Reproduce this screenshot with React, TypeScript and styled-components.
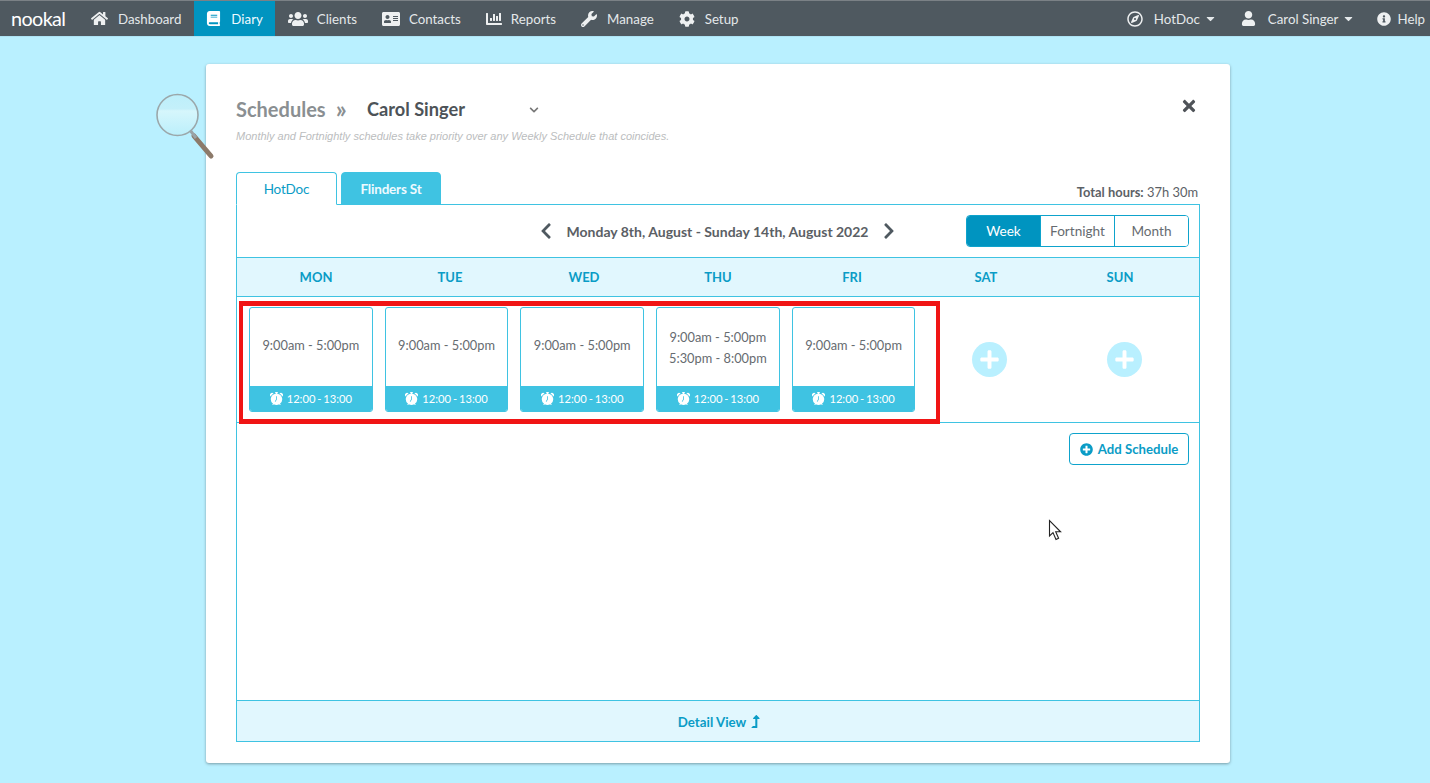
import React from "react";
import styled, { createGlobalStyle } from "styled-components";
import {
  FaHome, FaBook, FaUsers, FaAddressCard, FaChartBar, FaWrench, FaCog, FaRegCompass,
  FaUser, FaInfoCircle, FaCaretDown, FaChevronLeft, FaChevronRight, FaChevronDown,
  FaTimes, FaPlus, FaPlusCircle, FaLevelUpAlt,
} from "react-icons/fa";
import { BsAlarmFill } from "react-icons/bs";

const Global = createGlobalStyle`
  html, body { margin: 0; padding: 0; height: 100%; background: #b9f0ff; overflow: hidden; }
  body { font-family: Lato, "Open Sans", sans-serif; color: #555; }
  * { box-sizing: border-box; }
`;

const Page = styled.div`
  position: relative;
  width: 1430px;
  height: 783px;
  overflow: hidden;
`;
const TopBar = styled.header`
  height: 37px;
  background: #4f5960;
  border-top: 1px solid #7b8186;
  border-bottom: 1px solid #aee3f3;
  display: flex;
  align-items: stretch;
  color: #e4e8ea;
  font-size: 13.3px;
`;
const Logo = styled.div`
  width: 78.5px;
  padding-left: 11px;
  font-size: 19.8px;
  font-weight: 400;
  color: #fff;
  line-height: 35px;
  letter-spacing: -0.6px;
`;
const NavItem = styled.div<{ $active?: boolean; $gap?: number }>`
  display: flex;
  align-items: center;
  gap: ${(p) => p.$gap ?? 10}px;
  padding: 0 12.5px;
  background: ${(p) => (p.$active ? "#0094c0" : "transparent")};
  color: ${(p) => (p.$active ? "#eefaff" : "#e4e8ea")};
  white-space: nowrap;
  svg { flex: none; color: ${(p) => (p.$active ? "#fff" : "#eef0f1")}; }
`;
const Spacer = styled.div`
  flex: 1;
`;
const RightItem = styled.div<{ $pad: number }>`
  display: flex;
  align-items: center;
  padding-right: ${(p) => p.$pad}px;
  white-space: nowrap;
`;
const RightIcon = styled.span<{ $gap: number }>`
  display: inline-flex;
  margin-right: ${(p) => p.$gap}px;
  color: #eef0f1;
`;
const Caret = styled(FaCaretDown)`
  margin-left: 5px;
  width: 11px;
  height: 13px;
`;

const Modal = styled.main`
  position: relative;
  margin: 27px 0 0 206px;
  width: 1024px;
  height: 699px;
  background: #fff;
  border-radius: 3px;
  box-shadow: 0 1px 3px rgba(0, 0, 0, 0.35);
  padding: 28px 30px 0;
`;
const Lens = styled.svg`
  position: absolute;
  left: -52px;
  top: 25px;
`;
const TitleRow = styled.div`
  display: flex;
  align-items: center;
  height: 34px;
`;
const Title = styled.h1`
  margin: 0;
  font-size: 20px;
  font-weight: 700;
  color: #8a8f92;
  width: 131px;
  display: flex;
  gap: 10px;
  span { font-size: 24px; line-height: 23px; }
`;
const Person = styled.div`
  font-size: 18.2px;
  font-weight: 700;
  color: #4d5358;
  width: 162px;
`;
const PersonChevron = styled(FaChevronDown)`
  margin-top: 2px;
  color: #777;
`;
const Close = styled.div`
  position: absolute;
  right: 32px;
  top: 33px;
  color: #4f5358;
  display: flex;
`;
const Hint = styled.p`
  margin: 4px 0 0;
  font-family: "Liberation Sans", Arial, sans-serif;
  font-style: italic;
  font-size: 11px;
  color: #bbbdbe;
`;
const TabRow = styled.div`
  margin-top: 30px;
  width: 964px;
  height: 33px;
  display: flex;
  gap: 4px;
  position: relative;
  z-index: 1;
`;
const Tab = styled.div<{ $active?: boolean }>`
  width: ${(p) => (p.$active ? 101 : 100)}px;
  height: 33px;
  border: 1px solid #3fc3e2;
  border-bottom: ${(p) => (p.$active ? "1px solid #fff" : "1px solid #3fc3e2")};
  border-radius: 4px 4px 0 0;
  background: ${(p) => (p.$active ? "#fff" : "#3fc3e2")};
  color: ${(p) => (p.$active ? "#0a9cc6" : "#eefaff")};
  font-size: 13.5px;
  font-weight: ${(p) => (p.$active ? 400 : 700)};
  display: flex;
  align-items: center;
  justify-content: center;
  letter-spacing: -0.2px;
`;
const Total = styled.div`
  margin-left: auto;
  align-self: flex-end;
  padding: 0 2px 5px 0;
  font-size: 12.9px;
  color: #5c6166;
  b { font-weight: 700; }
`;
const Panel = styled.section`
  width: 964px;
  height: 538px;
  margin-top: -1px;
  border: 1px solid #3fc3e2;
  display: flex;
  flex-direction: column;
`;
const Toolbar = styled.div`
  height: 52px;
  flex: none;
  display: flex;
  align-items: center;
  padding: 0 10px 0 300px;
`;
const DateNav = styled.div`
  display: flex;
  align-items: center;
  font-size: 14px;
  font-weight: 700;
  color: #5b6065;
  svg { color: #4f5960; }
`;
const DateLabel = styled.span`
  margin: 0 11.5px;
`;
const Switch = styled.div`
  margin-left: auto;
  display: flex;
  width: 223px;
  height: 32px;
  border: 1px solid #0ea3cc;
  border-radius: 4px;
  overflow: hidden;
`;
const SwitchBtn = styled.div<{ $active?: boolean; $w: number }>`
  width: ${(p) => p.$w}px;
  display: flex;
  align-items: center;
  justify-content: center;
  font-size: 13.6px;
  background: ${(p) => (p.$active ? "#0094c0" : "#fff")};
  color: ${(p) => (p.$active ? "#fff" : "#666b70")};
  & + & { border-left: 1px solid #0ea3cc; }
`;
const DayHead = styled.div`
  height: 40px;
  flex: none;
  background: #e1f7fe;
  border-top: 1px solid #3fc3e2;
  border-bottom: 1px solid #3fc3e2;
  padding: 0 12px;
  display: grid;
  grid-template-columns: repeat(7, 134px);
`;
const DayName = styled.div`
  display: flex;
  align-items: center;
  justify-content: center;
  color: #0a9cc6;
  font-size: 13px;
  font-weight: 700;
`;
const Week = styled.div`
  height: 126px;
  flex: none;
  border-bottom: 1px solid #3fc3e2;
  padding: 10px 6px 0;
  display: grid;
  grid-template-columns: repeat(7, 135.7px);
  align-items: start;
`;
const Shift = styled.div`
  margin: 0 6px;
  height: 105px;
  border: 1px solid #3fc3e2;
  border-radius: 3px;
  overflow: hidden;
  display: flex;
  flex-direction: column;
`;
const ShiftTimes = styled.div<{ $lines: number }>`
  flex: 1;
  display: flex;
  flex-direction: column;
  align-items: center;
  justify-content: center;
  font-size: 12.8px;
  line-height: 21px;
  color: #666b70;
  padding: ${(p) => (p.$lines > 1 ? "2px 0 0" : "0 0 4px")};
  white-space: nowrap;
`;
const Break = styled.div`
  height: 25px;
  flex: none;
  background: #3fc3e2;
  color: #fff;
  font-size: 11.2px;
  word-spacing: -1px;
  display: flex;
  align-items: center;
  justify-content: center;
  gap: 4px;
  white-space: nowrap;
`;
const AddDay = styled.div`
  margin: 35px auto 0;
  width: 35px;
  height: 35px;
  border-radius: 50%;
  background: #b9f0ff;
  color: #fff;
  display: flex;
  align-items: center;
  justify-content: center;
`;
const Body = styled.div`
  flex: 1;
  padding: 10px 10px 0 0;
  display: flex;
  justify-content: flex-end;
  align-items: flex-start;
`;
const AddButton = styled.div`
  width: 120px;
  height: 32px;
  border: 1px solid #0ea3cc;
  border-radius: 4px;
  color: #0a9cc6;
  font-size: 13.2px;
  font-weight: 700;
  display: flex;
  align-items: center;
  justify-content: center;
  gap: 5px;
  white-space: nowrap;
`;
const Footer = styled.div`
  height: 41px;
  flex: none;
  background: #e1f7fe;
  border-top: 1px solid #3fc3e2;
  color: #0a9cc6;
  font-size: 13.3px;
  font-weight: 700;
  display: flex;
  align-items: center;
  justify-content: center;
  gap: 3px;
  padding: 1px 0 0 4px;
`;
const RedBox = styled.div`
  position: absolute;
  left: 239px;
  top: 301px;
  width: 701px;
  height: 123px;
  border: 4px solid #f01515;
  border-width: 5px 4px;
  pointer-events: none;
`;
const Cursor = styled.svg`
  position: absolute;
  left: 1048px;
  top: 519px;
`;

const nav = [
  { label: "Dashboard", icon: <FaHome size={17} /> },
  { label: "Diary", icon: <FaBook size={15} />, active: true },
  { label: "Clients", icon: <FaUsers size={20} />, gap: 9 },
  { label: "Contacts", icon: <FaAddressCard size={18} />, gap: 9 },
  { label: "Reports", icon: <FaChartBar size={16} />, gap: 9 },
  { label: "Manage", icon: <FaWrench size={16} />, gap: 10 },
  { label: "Setup", icon: <FaCog size={16} />, gap: 10 },
];
const days = ["MON", "TUE", "WED", "THU", "FRI", "SAT", "SUN"];
const shifts = [
  ["9:00am - 5:00pm"],
  ["9:00am - 5:00pm"],
  ["9:00am - 5:00pm"],
  ["9:00am - 5:00pm", "5:30pm - 8:00pm"],
  ["9:00am - 5:00pm"],
];

export default function App() {
  return (
    <Page>
      <Global />
      <TopBar>
        <Logo>nookal</Logo>
        {nav.map((n) => (
          <NavItem key={n.label} $active={n.active} $gap={n.gap}>
            {n.icon}
            {n.label}
          </NavItem>
        ))}
        <Spacer />
        <RightItem $pad={25}>
          <RightIcon $gap={11}><FaRegCompass size={16} /></RightIcon>
          HotDoc
          <Caret />
        </RightItem>
        <RightItem $pad={23}>
          <RightIcon $gap={12}><FaUser size={15} /></RightIcon>
          Carol Singer
          <Caret />
        </RightItem>
        <RightItem $pad={5}>
          <RightIcon $gap={6}><FaInfoCircle size={14} /></RightIcon>
          Help
        </RightItem>
      </TopBar>

      <Modal>
        <Lens width="62" height="74" viewBox="0 0 62 74">
          <defs>
            <linearGradient id="glass" x1="0" y1="0" x2="0" y2="1">
              <stop offset="0" stopColor="#bdeffb" />
              <stop offset="0.35" stopColor="#c4f0fa" />
              <stop offset="0.4" stopColor="#d6f6fc" />
              <stop offset="1" stopColor="#bbeffb" />
            </linearGradient>
          </defs>
          <line x1="40" y1="47" x2="57" y2="67" stroke="#8c7a6a" strokeWidth="5" strokeLinecap="round" />
          <line x1="36" y1="41" x2="42" y2="49" stroke="#9aa3a6" strokeWidth="3" />
          <circle cx="23.5" cy="26" r="20.5" fill="url(#glass)" stroke="#9ba7aa" strokeWidth="1.6" />
        </Lens>
        <TitleRow>
          <Title>Schedules <span>»</span></Title>
          <Person>Carol Singer</Person>
          <PersonChevron size={10} />
        </TitleRow>
        <Hint>Monthly and Fortnightly schedules take priority over any Weekly Schedule that coincides.</Hint>
        <Close><FaTimes size={18} /></Close>
        <TabRow>
          <Tab $active>HotDoc</Tab>
          <Tab>Flinders St</Tab>
          <Total><b>Total hours:</b> 37h 30m</Total>
        </TabRow>
        <Panel>
          <Toolbar>
            <DateNav>
              <FaChevronLeft size={18} />
              <DateLabel>Monday 8th, August - Sunday 14th, August 2022</DateLabel>
              <FaChevronRight size={18} />
            </DateNav>
            <Switch>
              <SwitchBtn $active $w={73}>Week</SwitchBtn>
              <SwitchBtn $w={74}>Fortnight</SwitchBtn>
              <SwitchBtn $w={74}>Month</SwitchBtn>
            </Switch>
          </Toolbar>
          <DayHead>
            {days.map((d) => <DayName key={d}>{d}</DayName>)}
          </DayHead>
          <Week>
            {shifts.map((times, i) => (
              <Shift key={i}>
                <ShiftTimes $lines={times.length}>
                  {times.map((t) => <div key={t}>{t}</div>)}
                </ShiftTimes>
                <Break><BsAlarmFill size={13} />12:00 - 13:00</Break>
              </Shift>
            ))}
            <AddDay><FaPlus size={21} /></AddDay>
            <AddDay><FaPlus size={21} /></AddDay>
          </Week>
          <Body>
            <AddButton><FaPlusCircle size={13} />Add Schedule</AddButton>
          </Body>
          <Footer>Detail View <FaLevelUpAlt size={13} /></Footer>
        </Panel>
      </Modal>

      <RedBox />
      <Cursor width="15" height="23" viewBox="0 0 15 23">
        <path d="M1.5 1.5 V17 L5 13.6 L8 20.5 L10.6 19.3 L7.7 12.8 H12.6 Z" fill="#fff" stroke="#222" strokeWidth="1.1" strokeLinejoin="miter" />
      </Cursor>
    </Page>
  );
}
